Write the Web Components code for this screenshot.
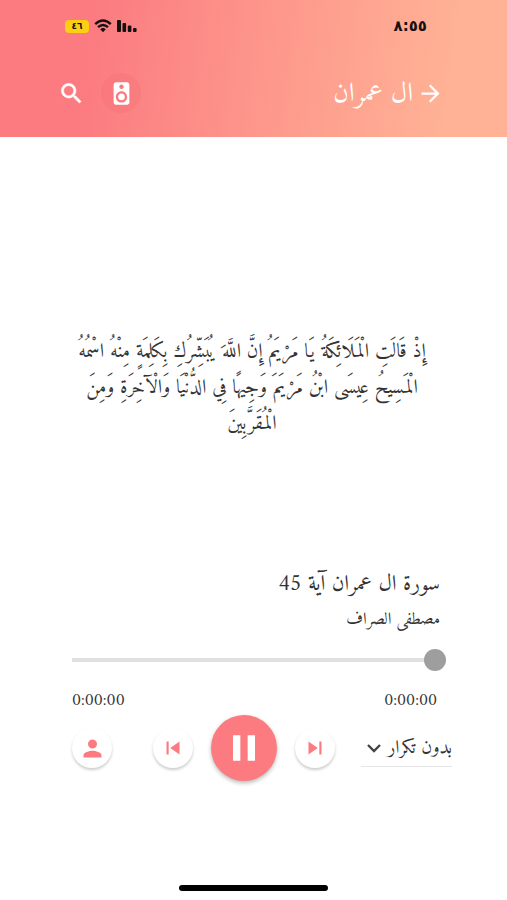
<!DOCTYPE html>
<html lang="ar" dir="rtl">
<head>
<meta charset="utf-8">
<meta name="viewport" content="width=device-width, initial-scale=1">
<title>ال عمران</title>
<style>
  body {
    margin: 0;
    background: #fff;
    color: #333;
    font-family: Amiri, "Liberation Serif", "DejaVu Sans", serif;
    --color-primary: #fb7b80;
    --color-accent: #ffb295;
  }
</style>
</head>
<body>
<player-screen>
  <status-bar slot="top"></status-bar>
  <app-bar slot="top">ال عمران</app-bar>
  <verse-text>
    <span>إِذْ قَالَتِ الْمَلَائِكَةُ يَا مَرْيَمُ إِنَّ اللَّهَ يُبَشِّرُكِ بِكَلِمَةٍ مِنْهُ اسْمُهُ</span>
    <span>الْمَسِيحُ عِيسَى ابْنُ مَرْيَمَ وَجِيهًا فِي الدُّنْيَا وَالْآخِرَةِ وَمِنَ</span>
    <span>الْمُقَرَّبِينَ</span>
  </verse-text>
  <track-info slot="player">
    <span slot="title">سورة ال عمران آية 45</span>
    <span slot="reader">مصطفى الصراف</span>
  </track-info>
  <seek-bar slot="player" start="0:00:00" end="0:00:00"></seek-bar>
  <player-controls slot="player"></player-controls>
</player-screen>

<script>
// Crea un elemento con su plantilla en el shadow DOM
function define(name, html) {
  const template = document.createElement('template');
  template.innerHTML = html;
  customElements.define(name, class extends HTMLElement {
    constructor() {
      super();
      this.attachShadow({ mode: 'open' });
      this.shadowRoot.appendChild(template.content.cloneNode(true));
    }
  });
}

// Botón redondo con icono
class RoundButton extends HTMLElement {
  connectedCallback() {
    if (this.shadowRoot) return;
    this.attachShadow({ mode: 'open' });
    this.shadowRoot.innerHTML = /*html*/`
      <style>
        :host { display: block; flex: none; }
        button {
          display: flex;
          align-items: center;
          justify-content: center;
          width: var(--size, 40px);
          height: var(--size, 40px);
          padding: 0;
          border: none;
          border-radius: 50%;
          background: var(--fill, #fff);
          color: var(--ink, var(--color-primary));
          box-shadow: var(--shadow, 0 2px 3px rgba(0,0,0,0.2));
          cursor: pointer;
        }
      </style>
      <button type="button"><slot></slot></button>
    `;
    this.shadowRoot.querySelector('button').setAttribute('aria-label', this.getAttribute('label'));
  }
}
customElements.define('round-button', RoundButton);

define('status-bar', /*html*/`
  <style>
    :host {
      display: flex;
      align-items: center;
      justify-content: space-between;
      height: 52px;
      padding: 0 80px 0 65px;
      color: #17100f;
      font-family: "DejaVu Sans", sans-serif;
    }
    time { font-size: 15px; font-weight: bold; line-height: 20px; }
    .icons { display: flex; direction: ltr; align-items: center; gap: 5px; }
    .battery {
      width: 24px;
      height: 13px;
      border-radius: 4px;
      background: #fbd012;
      font-size: 9px;
      font-weight: bold;
      line-height: 13px;
      text-align: center;
    }
    svg { display: block; }
  </style>
  <time>٨:٥٥</time>
  <div class="icons">
    <span class="battery">٤٦</span>
    <svg width="18" height="14" viewBox="0 0 18 14" fill="none" stroke="currentColor" stroke-width="2.4" aria-hidden="true">
      <path d="M1.2 5.2Q9-2 16.8 5.2M4 8.2Q9 3.8 14 8.2"/>
      <path d="M6.2 10.2Q9 8 11.8 10.2L9 13.2Z" fill="currentColor" stroke="none"/>
    </svg>
    <svg width="20" height="14" viewBox="0 0 20 14" fill="currentColor" aria-hidden="true">
      <rect x="0" y="1" width="4" height="12" rx="1"/>
      <rect x="5.5" y="4" width="3.6" height="9" rx="1"/>
      <rect x="10.8" y="6.5" width="3.6" height="6.5" rx="1"/>
      <rect x="16" y="9" width="3.6" height="4" rx="1"/>
    </svg>
  </div>
`);

define('app-bar', /*html*/`
  <style>
    :host {
      display: flex;
      align-items: center;
      justify-content: space-between;
      height: 85px;
      padding: 0 63px 3px 51px;
      box-sizing: border-box;
      color: #fff;
      --fill: transparent;
      --ink: #fff;
      --shadow: none;
    }
    .side { display: flex; align-items: center; }
    .back { --size: 27px; }
    .title { gap: 4px; }
    .actions { gap: 10px; }
    .speaker { --fill: rgba(240,100,115,0.22); }
    h1 { margin: 0; padding-top: 4px; font-size: 27px; font-weight: normal; line-height: 32px; }
    svg { display: block; }
  </style>
  <div class="side title">
    <round-button class="back" label="رجوع">
      <svg width="27" height="27" viewBox="0 0 24 24" fill="currentColor"><path d="M12 4l-1.41 1.41L16.17 11H4v2h12.17l-5.58 5.59L12 20l8-8z"/></svg>
    </round-button>
    <h1><slot></slot></h1>
  </div>
  <div class="side actions">
    <round-button class="speaker" label="مكبر الصوت">
      <svg width="27" height="27" viewBox="0 0 24 24" fill="currentColor"><path d="M17 2H7c-1.1 0-2 .9-2 2v16c0 1.1.9 1.99 2 1.99L17 22c1.1 0 2-.9 2-2V4c0-1.1-.9-2-2-2zm-5 2c1.1 0 2 .9 2 2s-.9 2-2 2a2 2 0 1 1 0-4zm0 16c-2.76 0-5-2.24-5-5s2.24-5 5-5 5 2.24 5 5-2.24 5-5 5zm0-8c-1.66 0-3 1.34-3 3s1.34 3 3 3 3-1.34 3-3-1.34-3-3-3z"/></svg>
    </round-button>
    <round-button label="بحث">
      <svg width="27" height="27" viewBox="0 0 24 24" fill="currentColor" stroke="currentColor" stroke-width=".5"><path d="M15.5 14h-.79l-.28-.27A6.47 6.47 0 0 0 16 9.5 6.5 6.5 0 1 0 9.5 16c1.61 0 3.09-.59 4.23-1.57l.27.28v.79l5 4.99L20.49 19l-4.99-5zm-6 0C7.01 14 5 11.99 5 9.5S7.01 5 9.5 5 14 7.01 14 9.5 11.99 14 9.5 14z"/></svg>
    </round-button>
  </div>
`);

define('verse-text', /*html*/`
  <style>
    :host { display: block; color: #333; font-size: 20px; line-height: 36px; text-align: center; }
    p { margin: 0; }
    ::slotted(span) { display: block; white-space: nowrap; }
  </style>
  <p><slot></slot></p>
`);

define('track-info', /*html*/`
  <style>
    :host { display: block; padding: 0 12px; }
    h2, p { margin: 0; font-weight: normal; }
    h2 { font-size: 22px; line-height: 36px; }
    p { font-size: 17px; line-height: 34px; }
  </style>
  <h2><slot name="title"></slot></h2>
  <p><slot name="reader"></slot></p>
`);

// Barra de progreso con los tiempos debajo
class SeekBar extends HTMLElement {
  connectedCallback() {
    if (this.shadowRoot) return;
    this.attachShadow({ mode: 'open' });
    this.shadowRoot.innerHTML = /*html*/`
      <style>
        :host { display: block; padding: 0 6px 0 0; }
        input {
          display: block;
          appearance: none;
          width: 100%;
          height: 22px;
          margin: 12px 0 20px;
          background: linear-gradient(#e0e0e0, #e0e0e0) left center / calc(100% - 11px) 4px no-repeat;
        }
        input::-webkit-slider-thumb {
          appearance: none;
          width: 22px;
          height: 22px;
          border-radius: 50%;
          background: #9e9e9e;
        }
        div { display: flex; justify-content: space-between; padding-right: 9px; font-size: 17px; line-height: 20px; }
      </style>
      <input type="range" min="0" max="100" value="0" aria-label="موضع التشغيل">
      <div><time class="end"></time><time class="start"></time></div>
    `;
    this.shadowRoot.querySelector('.end').textContent = this.getAttribute('end');
    this.shadowRoot.querySelector('.start').textContent = this.getAttribute('start');
  }
}
customElements.define('seek-bar', SeekBar);

define('player-controls', /*html*/`
  <style>
    :host { display: flex; align-items: center; justify-content: space-between; margin-top: 4px; }
    .main, .transport { display: flex; align-items: center; }
    .main { gap: 26px; }
    .transport { gap: 18px; }
    .play { --size: 66px; --fill: var(--color-primary); --ink: #fff; --shadow: 0 2px 4px rgba(0,0,0,0.28); }
    .repeat { display: grid; align-items: center; width: 91px; border-bottom: 1px solid #e6e6e6; }
    .repeat > * { grid-area: 1 / 1; }
    .repeat svg { margin-right: auto; margin-left: 3px; pointer-events: none; }
    select {
      appearance: none;
      width: 100%;
      height: 36px;
      padding: 2px 0 0;
      border: none;
      background: none;
      color: #333;
      font-family: inherit;
      font-size: 19px;
    }
    svg { display: block; }
  </style>
  <div class="main">
    <div class="repeat">
      <select aria-label="التكرار"><option>بدون تكرار</option></select>
      <svg width="20" height="20" viewBox="0 0 20 20" fill="none" stroke="#444" stroke-width="2.4"><path d="M4 7l6 6 6-6"/></svg>
    </div>
    <div class="transport">
      <round-button label="التالي">
        <svg width="26" height="26" viewBox="0 0 24 24" fill="currentColor"><path d="M6 18l8.5-6L6 6v12zM16 6v12h2V6h-2z"/></svg>
      </round-button>
      <round-button class="play" label="إيقاف مؤقت">
        <svg width="44" height="44" viewBox="0 0 24 24" fill="currentColor"><path d="M6 19h4V5H6v14zm8-14v14h4V5h-4z"/></svg>
      </round-button>
      <round-button label="السابق">
        <svg width="26" height="26" viewBox="0 0 24 24" fill="currentColor"><path d="M6 6h2v12H6zm3.5 6l8.5 6V6z"/></svg>
      </round-button>
    </div>
  </div>
  <round-button label="القارئ">
    <svg width="27" height="27" viewBox="0 0 24 24" fill="currentColor"><path d="M12 12c2.21 0 4-1.79 4-4s-1.79-4-4-4-4 1.79-4 4 1.79 4 4 4zm0 2c-2.67 0-8 1.34-8 4v2h16v-2c0-2.66-5.33-4-8-4z"/></svg>
  </round-button>
`);

define('player-screen', /*html*/`
  <style>
    :host { display: flex; flex-direction: column; min-height: 100vh; }
    header { background: linear-gradient(98deg, var(--color-primary) 18%, #fd958b 50%, var(--color-accent) 88%); }
    main { display: flex; flex: 1; flex-direction: column; }
    .verse { display: flex; flex: 1; align-items: center; justify-content: center; padding: 146px 3px 0 0; }
    .player { padding: 72px 55px 0 72px; }
    footer { padding: 104px 0 9px; }
    .home { width: 149px; height: 6px; margin: 0 auto; border-radius: 3px; background: #000; }
  </style>
  <header><slot name="top"></slot></header>
  <main>
    <div class="verse"><slot></slot></div>
    <section class="player"><slot name="player"></slot></section>
  </main>
  <footer><div class="home"></div></footer>
`);
</script>
</body>
</html>
